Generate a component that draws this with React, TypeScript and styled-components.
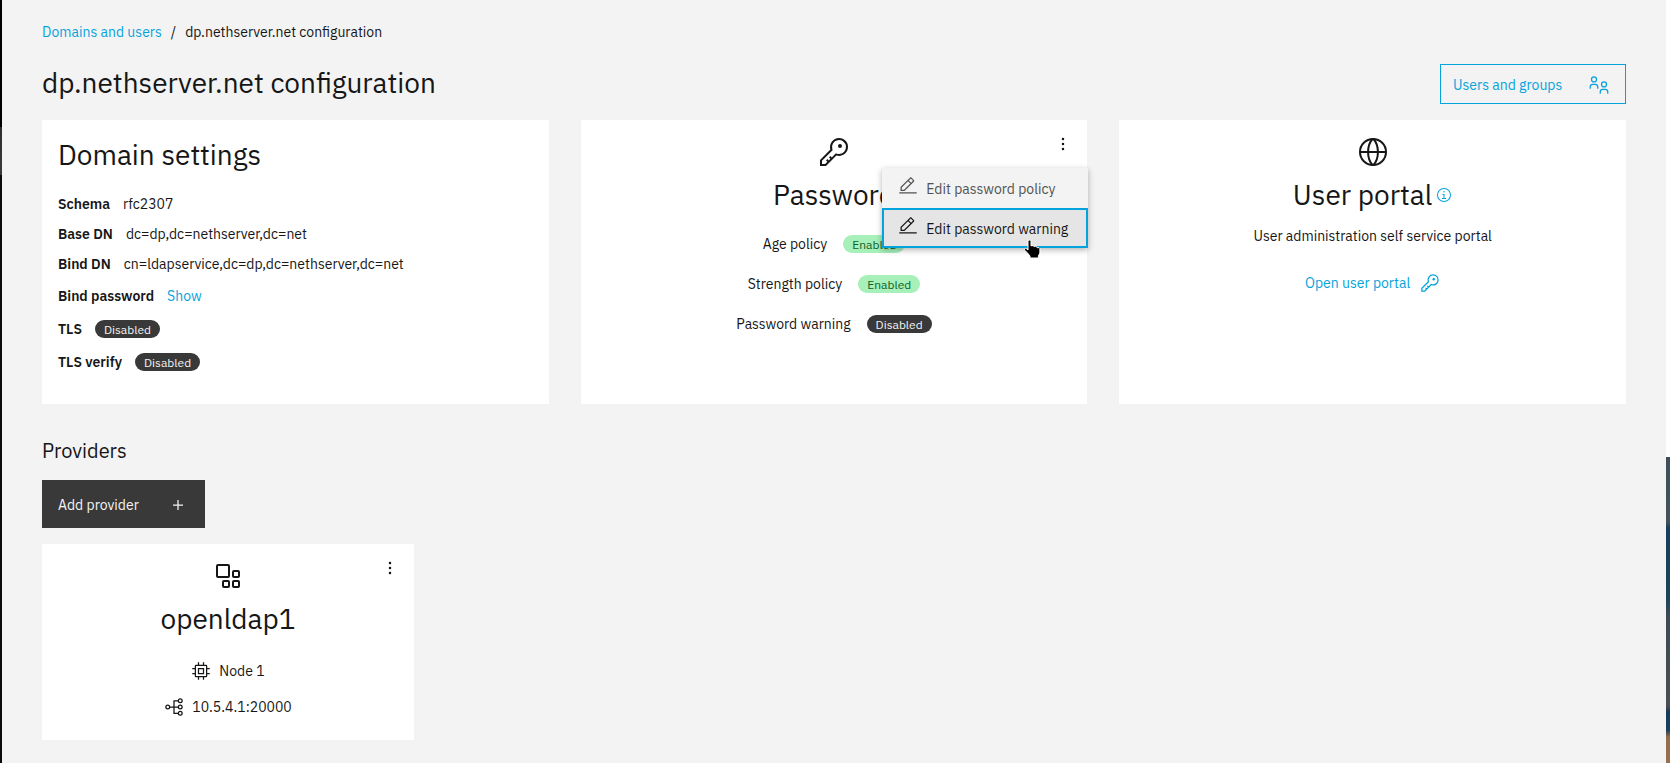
import React from 'react';
import type { ReactNode } from 'react';
import styled, { createGlobalStyle, css } from 'styled-components';

const color = {
  page: '#f3f3f3',
  card: '#ffffff',
  text: '#161616',
  muted: '#525252',
  accent: '#04a3dc',
  dark: '#393939',
  hover: '#e5e5e5',
};

const GlobalStyle = createGlobalStyle`
  *, *::before, *::after { box-sizing: border-box; }
  body {
    margin: 0;
    background: ${color.page};
    color: ${color.text};
    font-family: 'IBM Plex Sans', Roboto, 'Liberation Sans', sans-serif;
    font-size: 14px;
    line-height: 18px;
  }
  h1, h2, h3, p, dl, dd, dt, ul, ol { margin: 0; padding: 0; font-weight: 400; }
  ul, ol { list-style: none; }
  button { font: inherit; color: inherit; background: none; border: 0; padding: 0; cursor: pointer; }
`;

/* ---------- page frame ---------- */

const Shell = styled.div`
  display: grid;
  grid-template-columns: 2px minmax(0, 1fr) 4px;
  min-height: 100vh;
`;

const NavEdge = styled.div`
  background: linear-gradient(#000 127px, #2e2e2e 127px, #393939 175px, #0b0b0d 175px);
`;

const BackdropEdge = styled.div`
  background: linear-gradient(
    #ffffff 457px, #3d4f5b 457px, #43525b 522px, #183e5a 528px, #1c4457 598px,
    #3b4b54 616px, #4b4e52 706px, #173a57 712px, #1c3f5a 730px, #8f6d4f 737px, #957150
  );
`;

const Page = styled.main`
  padding: 23px 40px;
`;

const Breadcrumb = styled.ol`
  display: flex;
  gap: 9px;
`;

const TextLink = styled.a`
  display: inline-flex;
  align-items: center;
  gap: 10px;
  color: ${color.accent};
  text-decoration: none;
`;

const Header = styled.header`
  display: flex;
  justify-content: space-between;
  margin: 23px 0 16px;
`;

const Title = styled.h1`
  font-size: 28px;
  line-height: 38px;
`;

const ActionButton = styled.button<{ $kind: 'outline' | 'solid' }>`
  display: flex;
  align-items: center;
  justify-content: space-between;
  line-height: 20px;
  ${({ $kind }) =>
    $kind === 'outline'
      ? css`
          width: 186px;
          height: 40px;
          padding: 1px 16px 0 12px;
          border: 1px solid ${color.accent};
          color: ${color.accent};
        `
      : css`
          width: 163px;
          height: 48px;
          padding: 1px 17px 0 16px;
          background: ${color.dark};
          color: #f4f4f4;
        `}
`;

const CardGrid = styled.section<{ $columns: number }>`
  display: grid;
  grid-template-columns: repeat(${({ $columns }) => $columns}, minmax(0, 1fr));
  gap: 32px;
`;

const ProviderGrid = styled(CardGrid)`
  margin-top: 16px;
`;

const SectionTitle = styled.h2`
  margin: 33px 0 15px;
  font-size: 20px;
  line-height: 28px;
`;

/* ---------- cards ---------- */

const Card = styled.article<{ $centered?: boolean }>`
  position: relative;
  padding: 16px 16px 23px;
  background: ${color.card};
  ${({ $centered }) =>
    $centered &&
    css`
      display: flex;
      flex-direction: column;
      align-items: center;
    `}
`;

const CardTitle = styled.h3<{ $afterIcon?: boolean }>`
  display: flex;
  align-items: center;
  gap: 4px;
  margin-top: ${({ $afterIcon }) => ($afterIcon ? '8px' : '0')};
  font-size: 28px;
  line-height: 38px;
`;

const Settings = styled.dl`
  padding: 15px 0 2px;
`;

const Setting = styled.div<{ $height: number }>`
  display: flex;
  align-items: center;
  gap: 13px;
  height: ${({ $height }) => $height}px;
`;

const Term = styled.dt`
  font-weight: 600;
`;

const Value = styled.dd`
  display: flex;
`;

const ShowButton = styled.button`
  color: ${color.accent};
`;

const Policies = styled.dl`
  margin-top: 10px;
`;

const Policy = styled.div`
  display: flex;
  align-items: center;
  justify-content: center;
  gap: 16px;
  height: 40px;
`;

const Tag = styled.span<{ $on?: boolean }>`
  height: 18px;
  padding: 0 9px;
  border-radius: 9px;
  font-size: 12px;
  line-height: 19px;
  background: ${({ $on }) => ($on ? '#a7f0ba' : color.dark)};
  color: ${({ $on }) => ($on ? '#0e6027' : '#f4f4f4')};
`;

const Description = styled.p`
  margin: 13px 0 28px;
`;

const Facts = styled.ul`
  display: flex;
  flex-direction: column;
  align-items: center;
  gap: 16px;
  margin-top: 23px;
`;

const Fact = styled.li`
  display: flex;
  align-items: center;
  gap: 8px;
  height: 20px;
`;

const InfoButton = styled.button`
  display: flex;
  color: ${color.accent};
`;

/* ---------- overflow menu ---------- */

const OverflowButton = styled.button`
  position: absolute;
  top: 0;
  right: 0;
  display: grid;
  place-items: center;
  width: 48px;
  height: 48px;
`;

const Menu = styled.div`
  position: absolute;
  top: 48px;
  right: -1px;
  z-index: 1;
  width: 206px;
  background: ${color.page};
  box-shadow: 0 2px 6px rgba(0, 0, 0, 0.3);
`;

const MenuItem = styled.button<{ $active?: boolean }>`
  position: relative;
  display: flex;
  align-items: flex-start;
  gap: 8px;
  width: 100%;
  height: 40px;
  padding: 8px 16px;
  line-height: 26px;
  white-space: nowrap;
  color: ${({ $active }) => ($active ? color.text : color.muted)};
  ${({ $active }) =>
    $active &&
    css`
      background: ${color.hover};
      box-shadow: inset 0 0 0 2px ${color.accent};
    `}
`;

const Pointer = styled.svg`
  position: absolute;
  top: 31px;
  right: 46px;
`;

/* ---------- icons, on a 32 unit grid ---------- */

const Icon = ({ size, children }: { size: number; children: ReactNode }) => (
  <svg width={size} height={size} viewBox="0 0 32 32" fill="currentColor" aria-hidden="true">
    {children}
  </svg>
);

const KeyIcon = ({ size }: { size: number }) => (
  <Icon size={size}>
    <path d="M21,2a8.9977,8.9977,0,0,0-8.6119,11.6118L2,24v6H8L18.3881,19.6118A9,9,0,1,0,21,2Zm0,16a7.0125,7.0125,0,0,1-2.0322-.3022L17.821,17.35l-.8472.8472-3.1811,3.1812L12.4141,20,11,21.4141l1.3787,1.3786-1.5859,1.586L9.4141,23,8,24.4141l1.3787,1.3786L7.1716,28H4V24.8284l9.8023-9.8023.8472-.8474-.3473-1.1467A7,7,0,1,1,21,18Z" />
    <circle cx="22" cy="10" r="2" />
  </Icon>
);

const GlobeIcon = () => (
  <Icon size={32}>
    <g fill="none" stroke="currentColor" strokeWidth="2">
      <circle cx="16" cy="16" r="13" />
      <path d="M3 16h26M15.500 3C9.600 9.500 9.600 22.500 15.500 29M16.500 3C22.400 9.500 22.400 22.500 16.500 29" />
    </g>
  </Icon>
);

const EditIcon = () => (
  <Icon size={20}>
    <path d="M2 26H30V28H2zM25.400 9c.8-.8.8-2 0-2.800l-3.600-3.600c-.8-.8-2-.8-2.800 0l-15 15V24h6.400L25.400 9zM20.400 4L24 7.600l-3 3L17.400 7 20.400 4zM6 22v-3.600l10-10 3.600 3.600-10 10H6z" />
  </Icon>
);

const OverflowIcon = () => (
  <Icon size={20}>
    <circle cx="16" cy="8" r="2" />
    <circle cx="16" cy="16" r="2" />
    <circle cx="16" cy="24" r="2" />
  </Icon>
);

const AddIcon = () => (
  <Icon size={20}>
    <path d="M17 15V8H15v7H8v2h7v7h2V17h7V15z" />
  </Icon>
);

const UsersIcon = () => (
  <Icon size={20}>
    <g fill="none" stroke="currentColor" strokeWidth="2">
      <circle cx="8" cy="7" r="4" />
      <path d="M2 22v-3a4 4 0 0 1 4-4h4a4 4 0 0 1 4 4v3" />
      <circle cx="24" cy="15" r="4" />
      <path d="M18 30v-3a4 4 0 0 1 4-4h4a4 4 0 0 1 4 4v3" />
    </g>
  </Icon>
);

const InfoIcon = () => (
  <Icon size={16}>
    <path d="M17 22V14H13v2h2v6H12v2h8V22zM16 8a1.500 1.500 0 1 0 1.500 1.500A1.500 1.500 0 0 0 16 8z" />
    <path d="M16,30A14,14,0,1,1,30,16,14,14,0,0,1,16,30ZM16,4A12,12,0,1,0,28,16,12,12,0,0,0,16,4Z" />
  </Icon>
);

const AppIcon = () => (
  <Icon size={32}>
    <g fill="none" stroke="currentColor" strokeWidth="2">
      <rect x="5" y="5" width="12" height="12" rx="1" />
      <rect x="21" y="11" width="6" height="6" rx="1" />
      <rect x="11" y="21" width="6" height="6" rx="1" />
      <rect x="21" y="21" width="6" height="6" rx="1" />
    </g>
  </Icon>
);

const ChipIcon = () => (
  <Icon size={20}>
    <path d="M11,11V21H21V11Zm8,8H13V13h6Z" />
    <path d="M30,13V11H26V8a2,2,0,0,0-2-2H21V2H19V6H13V2H11V6H8A2,2,0,0,0,6,8v3H2v2H6v6H2v2H6v3a2,2,0,0,0,2,2h3v4h2V26h6v4h2V26h3a2,2,0,0,0,2-2V21h4V19H26V13ZM24,24H8V8H24Z" />
  </Icon>
);

const NetworkIcon = () => (
  <Icon size={20}>
    <g fill="none" stroke="currentColor" strokeWidth="2">
      <circle cx="6" cy="16" r="3" />
      <circle cx="26" cy="6" r="3" />
      <circle cx="26" cy="16" r="3" />
      <circle cx="26" cy="26" r="3" />
      <path d="M9 16h14M23 6h-7v20h7" />
    </g>
  </Icon>
);

const HandPointer = () => (
  <Pointer width="19" height="20" viewBox="0 0 19 20" aria-hidden="true">
    <path
      d="M5 2.500a1.500 1.500 0 0 1 3 0V7l1-.5 1.800.5.4.7 1.400-.4 1.400.7.4.8 1.500-.2 1 1V14l-1.500 3v2H7V17L4.500 14 1.500 11c-.6-1.300.7-2.200 1.800-1.400L5 11z"
      fill="#000"
      stroke="#fff"
      strokeWidth="1"
      strokeLinejoin="round"
    />
  </Pointer>
);

/* ---------- page ---------- */

export default function App() {
  return (
    <>
      <GlobalStyle />
      <Shell>
        <NavEdge />
        <Page>
          <nav aria-label="Breadcrumb">
            <Breadcrumb>
              <li><TextLink href="#domains">Domains and users</TextLink></li>
              <li aria-hidden="true">/</li>
              <li aria-current="page">dp.nethserver.net configuration</li>
            </Breadcrumb>
          </nav>

          <Header>
            <Title>dp.nethserver.net configuration</Title>
            <ActionButton $kind="outline" type="button">
              Users and groups
              <UsersIcon />
            </ActionButton>
          </Header>

          <CardGrid $columns={3}>
            <Card>
              <CardTitle>Domain settings</CardTitle>
              <Settings>
                <Setting $height={30}><Term>Schema</Term><Value>rfc2307</Value></Setting>
                <Setting $height={30}><Term>Base DN</Term><Value>dc=dp,dc=nethserver,dc=net</Value></Setting>
                <Setting $height={30}><Term>Bind DN</Term><Value>cn=ldapservice,dc=dp,dc=nethserver,dc=net</Value></Setting>
                <Setting $height={34}><Term>Bind password</Term><Value><ShowButton type="button">Show</ShowButton></Value></Setting>
                <Setting $height={32}><Term>TLS</Term><Value><Tag>Disabled</Tag></Value></Setting>
                <Setting $height={34}><Term>TLS verify</Term><Value><Tag>Disabled</Tag></Value></Setting>
              </Settings>
            </Card>

            <Card $centered>
              <KeyIcon size={32} />
              <CardTitle $afterIcon>Password</CardTitle>
              <Policies>
                <Policy><dt>Age policy</dt><Value><Tag $on>Enabled</Tag></Value></Policy>
                <Policy><dt>Strength policy</dt><Value><Tag $on>Enabled</Tag></Value></Policy>
                <Policy><dt>Password warning</dt><Value><Tag>Disabled</Tag></Value></Policy>
              </Policies>
              <OverflowButton type="button" aria-label="Password actions" aria-haspopup="menu" aria-expanded="true">
                <OverflowIcon />
              </OverflowButton>
              <Menu role="menu">
                <MenuItem type="button" role="menuitem">
                  <EditIcon />
                  Edit password policy
                </MenuItem>
                <MenuItem type="button" role="menuitem" $active>
                  <EditIcon />
                  Edit password warning
                  <HandPointer />
                </MenuItem>
              </Menu>
            </Card>

            <Card $centered>
              <GlobeIcon />
              <CardTitle $afterIcon>
                User portal
                <InfoButton type="button" aria-label="About the user portal"><InfoIcon /></InfoButton>
              </CardTitle>
              <Description>User administration self service portal</Description>
              <TextLink href="#portal">
                Open user portal
                <KeyIcon size={20} />
              </TextLink>
            </Card>
          </CardGrid>

          <SectionTitle>Providers</SectionTitle>
          <ActionButton $kind="solid" type="button">
            Add provider
            <AddIcon />
          </ActionButton>

          <ProviderGrid $columns={4}>
            <Card $centered>
              <AppIcon />
              <CardTitle $afterIcon>openldap1</CardTitle>
              <Facts>
                <Fact><ChipIcon />Node 1</Fact>
                <Fact><NetworkIcon />10.5.4.1:20000</Fact>
              </Facts>
              <OverflowButton type="button" aria-label="openldap1 actions" aria-haspopup="menu">
                <OverflowIcon />
              </OverflowButton>
            </Card>
          </ProviderGrid>
        </Page>
        <BackdropEdge />
      </Shell>
    </>
  );
}
